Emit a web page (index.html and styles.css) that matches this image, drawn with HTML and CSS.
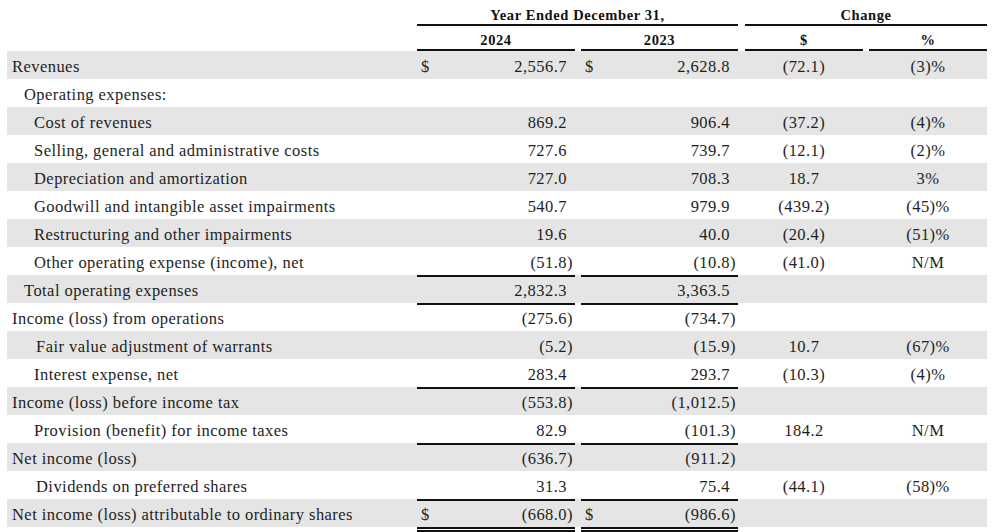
FILE: index.html
```html
<!DOCTYPE html>
<html lang="en">
<head>
<meta charset="utf-8">
<title>Results of Operations</title>
<link rel="stylesheet" href="styles.css">
</head>
<body>
<div class="stmt">
  <div class="hdr hdr1">
    <div class="lbl"></div>
    <div class="yr ul">Year Ended December 31,</div>
    <div class="chg ul">Change</div>
  </div>
  <div class="hdr hdr2">
    <div class="lbl"></div>
    <div class="a ul">2024</div>
    <div class="b ul">2023</div>
    <div class="c ul">$</div>
    <div class="d ul">%</div>
  </div>

  <div class="row shade">
    <div class="lbl l0">Revenues</div>
    <div class="a amt"><span class="cur">$</span><span class="pos">2,556.7</span></div>
    <div class="b amt"><span class="cur">$</span><span class="pos">2,628.8</span></div>
    <div class="c ctr">(72.1)</div>
    <div class="d ctr">(3)%</div>
  </div>
  <div class="row">
    <div class="lbl l1">Operating expenses:</div>
    <div class="a amt"></div><div class="b amt"></div><div class="c ctr"></div><div class="d ctr"></div>
  </div>
  <div class="row shade">
    <div class="lbl l2">Cost of revenues</div>
    <div class="a amt"><span class="pos">869.2</span></div>
    <div class="b amt"><span class="pos">906.4</span></div>
    <div class="c ctr">(37.2)</div>
    <div class="d ctr">(4)%</div>
  </div>
  <div class="row">
    <div class="lbl l2">Selling, general and administrative costs</div>
    <div class="a amt"><span class="pos">727.6</span></div>
    <div class="b amt"><span class="pos">739.7</span></div>
    <div class="c ctr">(12.1)</div>
    <div class="d ctr">(2)%</div>
  </div>
  <div class="row shade">
    <div class="lbl l2">Depreciation and amortization</div>
    <div class="a amt"><span class="pos">727.0</span></div>
    <div class="b amt"><span class="pos">708.3</span></div>
    <div class="c ctr">18.7</div>
    <div class="d ctr">3%</div>
  </div>
  <div class="row">
    <div class="lbl l2">Goodwill and intangible asset impairments</div>
    <div class="a amt"><span class="pos">540.7</span></div>
    <div class="b amt"><span class="pos">979.9</span></div>
    <div class="c ctr">(439.2)</div>
    <div class="d ctr">(45)%</div>
  </div>
  <div class="row shade">
    <div class="lbl l2">Restructuring and other impairments</div>
    <div class="a amt"><span class="pos">19.6</span></div>
    <div class="b amt"><span class="pos">40.0</span></div>
    <div class="c ctr">(20.4)</div>
    <div class="d ctr">(51)%</div>
  </div>
  <div class="row">
    <div class="lbl l2">Other operating expense (income), net</div>
    <div class="a amt ul"><span>(51.8)</span></div>
    <div class="b amt ul"><span>(10.8)</span></div>
    <div class="c ctr">(41.0)</div>
    <div class="d ctr">N/M</div>
  </div>
  <div class="row shade">
    <div class="lbl l1">Total operating expenses</div>
    <div class="a amt ul"><span class="pos">2,832.3</span></div>
    <div class="b amt ul"><span class="pos">3,363.5</span></div>
    <div class="c ctr"></div>
    <div class="d ctr"></div>
  </div>
  <div class="row">
    <div class="lbl l0">Income (loss) from operations</div>
    <div class="a amt"><span>(275.6)</span></div>
    <div class="b amt"><span>(734.7)</span></div>
    <div class="c ctr"></div>
    <div class="d ctr"></div>
  </div>
  <div class="row shade">
    <div class="lbl l3">Fair value adjustment of warrants</div>
    <div class="a amt"><span>(5.2)</span></div>
    <div class="b amt"><span>(15.9)</span></div>
    <div class="c ctr">10.7</div>
    <div class="d ctr">(67)%</div>
  </div>
  <div class="row">
    <div class="lbl l2">Interest expense, net</div>
    <div class="a amt ul"><span class="pos">283.4</span></div>
    <div class="b amt ul"><span class="pos">293.7</span></div>
    <div class="c ctr">(10.3)</div>
    <div class="d ctr">(4)%</div>
  </div>
  <div class="row shade">
    <div class="lbl l0">Income (loss) before income tax</div>
    <div class="a amt"><span>(553.8)</span></div>
    <div class="b amt"><span>(1,012.5)</span></div>
    <div class="c ctr"></div>
    <div class="d ctr"></div>
  </div>
  <div class="row">
    <div class="lbl l2">Provision (benefit) for income taxes</div>
    <div class="a amt ul"><span class="pos">82.9</span></div>
    <div class="b amt ul"><span>(101.3)</span></div>
    <div class="c ctr">184.2</div>
    <div class="d ctr">N/M</div>
  </div>
  <div class="row shade">
    <div class="lbl l0">Net income (loss)</div>
    <div class="a amt"><span>(636.7)</span></div>
    <div class="b amt"><span>(911.2)</span></div>
    <div class="c ctr"></div>
    <div class="d ctr"></div>
  </div>
  <div class="row">
    <div class="lbl l3">Dividends on preferred shares</div>
    <div class="a amt ul"><span class="pos">31.3</span></div>
    <div class="b amt ul"><span class="pos">75.4</span></div>
    <div class="c ctr">(44.1)</div>
    <div class="d ctr">(58)%</div>
  </div>
  <div class="row shade last">
    <div class="lbl l0">Net income (loss) attributable to ordinary shares</div>
    <div class="a amt dbl"><span class="cur">$</span><span>(668.0)</span></div>
    <div class="b amt dbl"><span class="cur">$</span><span>(986.6)</span></div>
    <div class="c ctr"></div>
    <div class="d ctr"></div>
  </div>
</div>
</body>
</html>
```

FILE: styles.css
```css
* { box-sizing: border-box; }

html, body {
  margin: 0;
  padding: 0;
  background: #ffffff;
}

body {
  font-family: "Liberation Serif", "Times New Roman", serif;
  color: #1e1e1e;
}

.stmt {
  padding-left: 7px;
  width: 987px;
}

.hdr,
.row {
  display: grid;
  grid-template-columns: 410px 158px 163px 125px 124px;
}

.hdr {
  font-weight: bold;
  font-size: 14.5px;
  letter-spacing: 0.6px;
  line-height: 18px;
  text-align: center;
  color: #111;
}

.hdr1 { height: 26px; }
.hdr1 > div { padding-top: 6px; }
.hdr2 { height: 25px; }
.hdr2 > div { padding-top: 5px; }

.yr { grid-column: 2 / 4; }
.chg { grid-column: 4 / 6; margin-left: 7px; }

.ul { border-bottom: 2px solid #111; }

.row {
  height: 28px;
  font-size: 16.5px;
  letter-spacing: 0.45px;
  line-height: 24px;
}

.row > div { padding-top: 4px; }

.shade { background: #e5e5e5; }

.b { margin-left: 6px; }
.c { margin-left: 7px; }
.d { margin-left: 6px; }

.lbl { white-space: nowrap; }
.l0 { padding-left: 5px; }
.l1 { padding-left: 17px; }
.l2 { padding-left: 27px; }
.l3 { padding-left: 29px; }

.amt {
  display: flex;
  justify-content: flex-end;
  padding-right: 2px;
  white-space: nowrap;
}

.amt .cur {
  margin-right: auto;
  padding-left: 4px;
}

.amt .pos { padding-right: 6px; }

.ctr {
  text-align: center;
  white-space: nowrap;
}

.last {
  height: 33px;
  background: linear-gradient(#e5e5e5, #e5e5e5) top left / 100% 28px no-repeat;
}

.dbl {
  height: 33px;
  border-bottom: 5px double #111;
}
```
